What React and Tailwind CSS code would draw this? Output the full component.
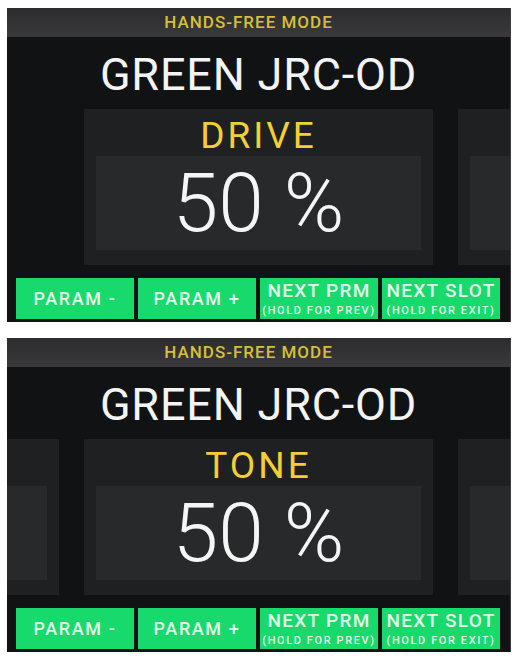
import React from 'react';

const font = { fontFamily: 'Roboto, "Liberation Sans", sans-serif' };

const ParamCard = ({ name, value, hidden }) => (
  <div className={`w-[349px] h-[156px] shrink-0 bg-[#1f2022] px-[12px] flex flex-col ${hidden ? 'invisible' : ''}`}>
    <div className="h-[47px] pt-[8px] text-center text-[37px] leading-none tracking-[3px] text-[#f3cf36]">
      {name}
    </div>
    <div className="h-[94px] bg-[#28292b] flex items-center justify-center">
      <span className="text-[82px] leading-none font-light text-[#f5f5f5]">{value}</span>
    </div>
  </div>
);

const SoftButton = ({ label, sub }) => (
  <button className="flex-1 h-[41px] bg-[#18d96c] flex flex-col items-center justify-center text-[#e3fbea] font-medium">
    {sub ? (
      <>
        <span className="text-[19px] leading-[19px] tracking-[1.3px]">{label}</span>
        <span className="mt-[5px] text-[11px] leading-[12px] tracking-[1.6px]">{sub}</span>
      </>
    ) : (
      <span className="text-[18px] leading-none tracking-[1.6px]">{label}</span>
    )}
  </button>
);

const Screen = ({ param, showLeft }) => (
  <div className="w-[504px] h-[314px] bg-[#111214] flex flex-col overflow-hidden border-r border-[#3c3c3e]">
    <div className="h-[29px] pr-[20px] bg-gradient-to-b from-[#2c2c2e] to-[#3a3a3c] flex items-center justify-center">
      <span className="text-[17px] font-medium tracking-[1px] text-[#d6bf3a]">HANDS-FREE MODE</span>
    </div>
    <div className="h-[72px] pt-[15px] text-center text-[45px] leading-none tracking-[0.8px] text-[#f4f4f4]">
      GREEN JRC-OD
    </div>
    <div className="flex justify-center gap-[25px] overflow-hidden">
      <ParamCard name="" value="" hidden={!showLeft} />
      <ParamCard name={param} value="50 %" />
      <ParamCard name="" value="" />
    </div>
    <div className="mt-[13px] pl-[9px] pr-[10px] flex gap-[4px]">
      <SoftButton label="PARAM -" />
      <SoftButton label="PARAM +" />
      <SoftButton label="NEXT PRM" sub="(HOLD FOR PREV)" />
      <SoftButton label="NEXT SLOT" sub="(HOLD FOR EXIT)" />
    </div>
  </div>
);

export default function App() {
  return (
    <div className="w-[519px] h-[664px] bg-white pt-[8px] px-[7px] flex flex-col gap-[16px]" style={font}>
      <Screen param="DRIVE" />
      <Screen param="TONE" showLeft />
    </div>
  );
}
